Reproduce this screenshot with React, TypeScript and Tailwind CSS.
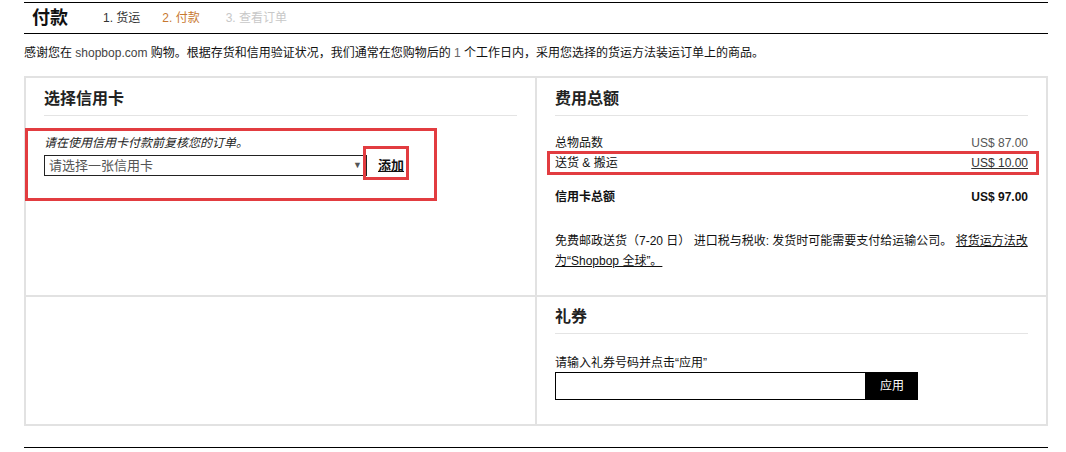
import React from "react";

const font = {
  fontFamily: '"Liberation Sans", Arial, "Noto Sans CJK SC", sans-serif',
};

export default function App() {
  return (
    <div className="bg-white w-[1066px] h-[452px] text-[#111] text-[12px]" style={font}>
      <div className="ml-[24px] w-[1024px] pt-[2px]">
        {/* Header */}
        <div className="border-t border-b border-black h-[32px] flex items-center pl-[8px]">
          <h1 className="text-[18px] font-bold text-[#111] leading-none mr-[35px]">付款</h1>
          <span className="text-[#333] mr-[22px]">1. 货运</span>
          <span className="text-[#c8782f] mr-[26px]">2. 付款</span>
          <span className="text-[#c8c8c8]">3. 查看订单</span>
        </div>

        {/* Intro */}
        <p className="mt-[11px] leading-[16px] text-[#111]">
          感谢您在 <span className="text-[#444]">shopbop.com</span> 购物。根据存货和信用验证状况，我们通常在您购物后的{" "}
          <span className="text-[#666]">1</span> 个工作日内，采用您选择的货运方法装运订单上的商品。
        </p>

        {/* Grid */}
        <div className="mt-[15px] grid grid-cols-2 grid-rows-[217px_127px] gap-[2px] bg-[#e2e2e2] p-[2px]">
          {/* Select card */}
          <div className="relative bg-white px-[18px] pt-[11px]">
            <h2 className="text-[16px] leading-[20px] font-bold text-[#222] pb-[6px] border-b border-[#e4e4e4]">
              选择信用卡
            </h2>
            <p className="mt-[19px] italic leading-[16px] text-[#222]">请在使用信用卡付款前复核您的订单。</p>
            <div className="mt-[4px] flex items-center">
              <div className="w-[323px] h-[21px] border border-[#222] flex items-center justify-between pl-[4px] pr-[4px]">
                <span className="text-[13px] text-[#555]">请选择一张信用卡</span>
                <span className="text-[9px] text-[#555]">▼</span>
              </div>
              <a className="ml-[11px] font-bold text-[13px] underline text-[#111]">添加</a>
            </div>
            <div className="absolute left-[-1px] top-[50px] w-[412px] h-[73px] border-[3px] border-[#e23c40]" />
            <div className="absolute left-[337px] top-[68px] w-[46px] h-[34px] border-[3px] border-[#e23c40]" />
          </div>

          {/* Totals */}
          <div className="relative bg-white px-[18px] pt-[11px]">
            <h2 className="text-[16px] leading-[20px] font-bold text-[#222] pb-[6px] border-b border-[#e4e4e4]">
              费用总额
            </h2>
            <div className="mt-[17px] flex justify-between leading-[20px]">
              <span>总物品数</span>
              <span className="text-[#555]">US$ 87.00</span>
            </div>
            <div className="flex justify-between leading-[20px]">
              <span>送货 &amp; 搬运</span>
              <span className="underline text-[#333]">US$ 10.00</span>
            </div>
            <div className="mt-[14px] flex justify-between leading-[20px] font-bold text-[#111]">
              <span>信用卡总额</span>
              <span>US$ 97.00</span>
            </div>
            <p className="mt-[24px] leading-[20px] text-[#111]">
              免费邮政送货（7-20 日） 进口税与税收: 发货时可能需要支付给运输公司。{" "}
              <a className="underline">
                将货运方法改
                <br />
                为“Shopbop 全球”。
              </a>
            </p>
            <div className="absolute left-[10px] top-[73px] w-[492px] h-[24px] border-[3px] border-[#e23c40]" />
          </div>

          {/* Empty */}
          <div className="bg-white" />

          {/* Gift card */}
          <div className="bg-white px-[18px] pt-[10px]">
            <h2 className="text-[16px] leading-[20px] font-bold text-[#222] pb-[6px] border-b border-[#e4e4e4]">
              礼券
            </h2>
            <p className="mt-[21px] leading-[16px]">请输入礼券号码并点击“应用”</p>
            <div className="mt-[1px] flex">
              <input className="w-[311px] h-[28px] border border-black outline-none px-[4px]" />
              <button className="w-[52px] h-[28px] bg-black text-white text-[12px]">应用</button>
            </div>
          </div>
        </div>

        <div className="mt-[21px] border-t border-black" />
      </div>
    </div>
  );
}
